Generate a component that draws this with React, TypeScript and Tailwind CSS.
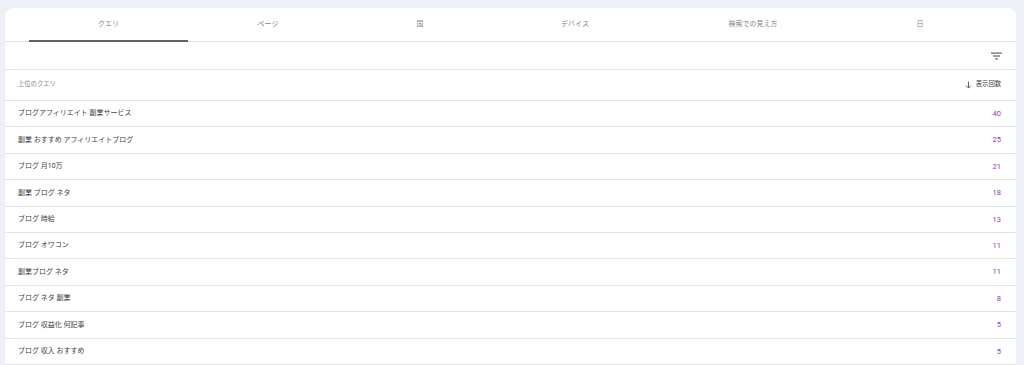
const TABS = [
  { label: "クエリ", w: "w-[159px]" },
  { label: "ページ", w: "w-[160px]" },
  { label: "国", w: "w-[144px]" },
  { label: "デバイス", w: "w-[166px]" },
  { label: "検索での見え方", w: "w-[190px]" },
  { label: "日", w: "w-[144px]" },
];

const ROWS = [
  { q: "ブログアフィリエイト 副業サービス", n: 40 },
  { q: "副業 おすすめ アフィリエイトブログ", n: 25 },
  { q: "ブログ 月10万", n: 21 },
  { q: "副業 ブログ ネタ", n: 18 },
  { q: "ブログ 時給", n: 13 },
  { q: "ブログ オワコン", n: 11 },
  { q: "副業ブログ ネタ", n: 11 },
  { q: "ブログ ネタ 副業", n: 8 },
  { q: "ブログ 収益化 何記事", n: 5 },
  { q: "ブログ 収入 おすすめ", n: 5 },
];

export default function App() {
  return (
    <div
      className="bg-[#edf0f6] w-[1024px] h-[365px] overflow-hidden pt-[8px] pl-[5px] pr-[8px]"
      style={{ fontFamily: "Roboto, 'Noto Sans CJK JP', sans-serif" }}
    >
      <div className="bg-white rounded-t-[8px] h-[400px]">
        {/* Tabs */}
        <div className="flex pl-[24px] h-[34px] border-b border-[#e3e3e3]">
          {TABS.map((t, i) => (
            <div
              key={i}
              className={`${t.w} relative flex items-center justify-center text-[7px] text-[#80868b]`}
            >
              {t.label}
              {i === 0 && (
                <div className="absolute left-0 right-0 bottom-[-1px] h-[2px] bg-[#5f6368]" />
              )}
            </div>
          ))}
        </div>

        {/* Filter row */}
        <div className="flex justify-end items-center h-[28px] pr-[14px] border-b border-[#e3e3e3]">
          <svg width="11" height="8" viewBox="0 0 11 8">
            <rect x="0" y="0.5" width="11" height="1.2" fill="#5f6368" />
            <rect x="2" y="3.4" width="7" height="1.2" fill="#5f6368" />
            <rect x="4.2" y="6.3" width="2.6" height="1.2" fill="#5f6368" />
          </svg>
        </div>

        {/* Header row */}
        <div className="flex justify-between items-center h-[31px] pl-[13px] pr-[15px] border-b border-[#e3e3e3] text-[6.3px] text-[#80868b]">
          <span>上位のクエリ</span>
          <span className="flex items-center gap-[4px] text-[#3c4043]">
            <svg width="7" height="8" viewBox="0 0 7 8">
              <path d="M3.5 0.5V7M1 4.6L3.5 7.1L6 4.6" stroke="#3c4043" strokeWidth="0.8" fill="none" />
            </svg>
            表示回数
          </span>
        </div>

        {ROWS.map((r, i) => (
          <div
            key={i}
            className="flex justify-between items-center h-[26.4px] pl-[13px] pr-[15px] border-b border-[#e3e3e3]"
          >
            <span className="text-[7px] text-[#3c4043]">{r.q}</span>
            <span className="text-[7.5px] text-[#9334b8]">{r.n}</span>
          </div>
        ))}
      </div>
    </div>
  );
}
